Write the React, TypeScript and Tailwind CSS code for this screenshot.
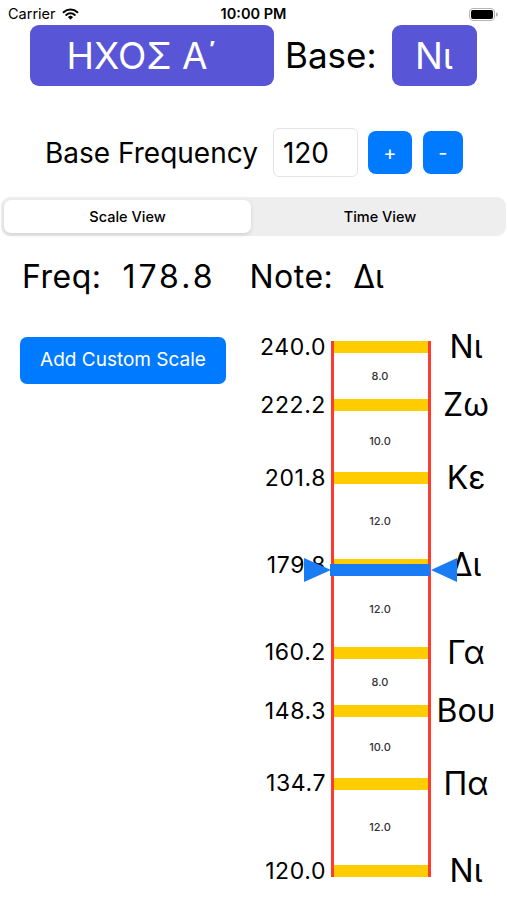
import React from "react";

const PX_PER_MORIA = 524 / 72;
const TOP = 27;

const notes = [
  { name: "Νι", freq: "240.0", pos: 0 },
  { name: "Ζω", freq: "222.2", pos: 8 },
  { name: "Κε", freq: "201.8", pos: 18 },
  { name: "Δι", freq: "179.8", pos: 30 },
  { name: "Γα", freq: "160.2", pos: 42 },
  { name: "Βου", freq: "148.3", pos: 50 },
  { name: "Πα", freq: "134.7", pos: 60 },
  { name: "Νι", freq: "120.0", pos: 72 },
];

// current pitch, in moria from the top note
const currentPos = 30.58;

const yOf = (pos: number) => TOP + pos * PX_PER_MORIA;

function StatusBar() {
  return (
    <div className="h-[25px] pt-[3px] px-[8px] flex items-center justify-between text-[14.5px] text-black">
      <div className="flex items-center gap-[6px] w-[120px]">
        <span>Carrier</span>
        <svg width="17" height="12" viewBox="0 0 17 12" fill="none">
          <path d="M1.6 4.2 A10 10 0 0 1 15.4 4.2" stroke="black" strokeWidth="2" strokeLinecap="round" />
          <path d="M4.2 6.9 A6.3 6.3 0 0 1 12.8 6.9" stroke="black" strokeWidth="2" strokeLinecap="round" />
          <path d="M8.5 11.2 L6.4 9.1 A3 3 0 0 1 10.6 9.1 Z" fill="black" stroke="black" strokeWidth="0.8" strokeLinejoin="round" />
        </svg>
      </div>
      <span className="font-semibold">10:00 PM</span>
      <div className="w-[120px] flex justify-end">
        <svg width="30" height="13" viewBox="0 0 30 13">
          <rect x="0.5" y="0.5" width="25" height="12" rx="3.5" fill="none" stroke="#b5b5b5" />
          <rect x="2" y="2" width="22" height="9" rx="2" fill="black" />
          <path d="M27 4.5 v4 a2 2 0 0 0 0 -4 z" fill="#b5b5b5" />
        </svg>
      </div>
    </div>
  );
}

function ScaleDiagram() {
  return (
    <div className="relative w-[257px] h-[570px]">
      {/* yellow note bars */}
      {notes.map((n, i) => (
        <div
          key={"bar" + i}
          className="absolute left-[81px] w-[99px] h-[12px] bg-[#FFCC00]"
          style={{ top: yOf(n.pos) - 6 }}
        />
      ))}

      {/* interval sizes */}
      {notes.slice(1).map((n, i) => {
        const prev = notes[i];
        return (
          <div
            key={"int" + i}
            className="absolute left-[100px] w-[60px] h-[16px] flex items-center justify-center text-[11px] text-[#333] font-medium"
            style={{ top: (yOf(prev.pos) + yOf(n.pos)) / 2 - 8 }}
          >
            {(n.pos - prev.pos).toFixed(1)}
          </div>
        );
      })}

      {/* red side rails */}
      <div className="absolute left-[81px] top-[21px] w-[2.5px] h-[536px] bg-[#FF3B30]" />
      <div className="absolute left-[178px] top-[21px] w-[2.5px] h-[536px] bg-[#FF3B30]" />

      {/* frequency labels */}
      {notes.map((n, i) => (
        <div
          key={"f" + i}
          className="absolute left-0 w-[76px] h-[30px] flex items-center justify-end text-[23px] tracking-[0.6px] text-black"
          style={{ top: yOf(n.pos) - 15 }}
        >
          {n.freq}
        </div>
      ))}

      {/* note names */}
      {notes.map((n, i) => (
        <div
          key={"n" + i}
          className="absolute left-[176px] w-[80px] h-[40px] flex items-center justify-center text-[32px] text-black"
          style={{ top: yOf(n.pos) - 20 }}
        >
          {n.name}
        </div>
      ))}

      {/* current pitch marker */}
      <div
        className="absolute left-[80px] w-[100px] h-[12px] bg-[#1A7CF5]"
        style={{ top: yOf(currentPos) - 6 }}
      />
      <svg
        className="absolute left-[54px]"
        style={{ top: yOf(currentPos) - 12 }}
        width="27"
        height="24"
        viewBox="0 0 27 24"
      >
        <polygon points="0,0 27,12 0,24" fill="#1A7CF5" />
      </svg>
      <svg
        className="absolute left-[181px]"
        style={{ top: yOf(currentPos) - 12 }}
        width="26"
        height="24"
        viewBox="0 0 26 24"
      >
        <polygon points="26,0 0,12 26,24" fill="#1A7CF5" />
      </svg>
    </div>
  );
}

export default function App() {
  return (
    <div
      className="w-[507px] h-[900px] bg-white overflow-hidden text-black"
      style={{ fontFamily: "Inter, 'Noto Sans', 'Liberation Sans', sans-serif" }}
    >
      <StatusBar />

      {/* mode + base */}
      <div className="flex items-center pl-[30px] h-[61px]">
        <button className="w-[244px] h-[61px] rounded-[9px] bg-[#5856D6] text-white text-[37px] leading-none pr-[20px]">
          ΗΧΟΣ Α΄
        </button>
        <span className="ml-[11px] text-[35px] leading-none">Base:</span>
        <button className="ml-[15px] w-[85px] h-[61px] rounded-[9px] bg-[#5856D6] text-white text-[37px] leading-none">
          Νι
        </button>
      </div>

      {/* base frequency */}
      <div className="mt-[42px] h-[49px] flex items-center pl-[45px]">
        <span className="text-[28px] leading-none">Base Frequency</span>
        <div className="ml-[15px] w-[85px] h-[49px] border border-[#e4e4e4] rounded-[6px] flex items-center pl-[9px] text-[28px]">
          120
        </div>
        <button className="ml-[10px] w-[44px] h-[43px] rounded-[8px] bg-[#007AFF] text-white text-[20px] leading-none">
          +
        </button>
        <button className="ml-[11px] w-[40px] h-[43px] rounded-[8px] bg-[#007AFF] text-white text-[20px] leading-none">
          -
        </button>
      </div>

      {/* segmented control */}
      <div className="mt-[20px] mx-[1px] h-[39px] rounded-[9px] bg-[#EEEEEF] p-[3px] flex">
        <div className="w-[247px] h-full rounded-[7px] bg-white shadow-[0_2px_4px_rgba(0,0,0,0.12)] flex items-center justify-center text-[14.5px] font-medium">
          Scale View
        </div>
        <div className="flex-1 flex items-center justify-center pl-[6px] text-[14.5px] font-medium">
          Time View
        </div>
      </div>

      {/* current reading */}
      <div className="mt-[20px] h-[42px] leading-[42px] pl-[22px] text-[32px] flex">
        <span className="tracking-[0.5px]">Freq:</span>
        <span className="ml-[21px] tracking-[3px]">178.8</span>
        <span className="ml-[34px] tracking-[0.5px]">Note:</span>
        <span className="ml-[20px]">Δι</span>
      </div>

      {/* body */}
      <div className="mt-[22px] flex">
        <div className="w-[250px] pt-[17px] pl-[20px]">
          <button className="w-[206px] h-[47px] rounded-[7px] bg-[#007AFF] text-white text-[19px]">
            Add Custom Scale
          </button>
        </div>
        <ScaleDiagram />
      </div>
    </div>
  );
}
